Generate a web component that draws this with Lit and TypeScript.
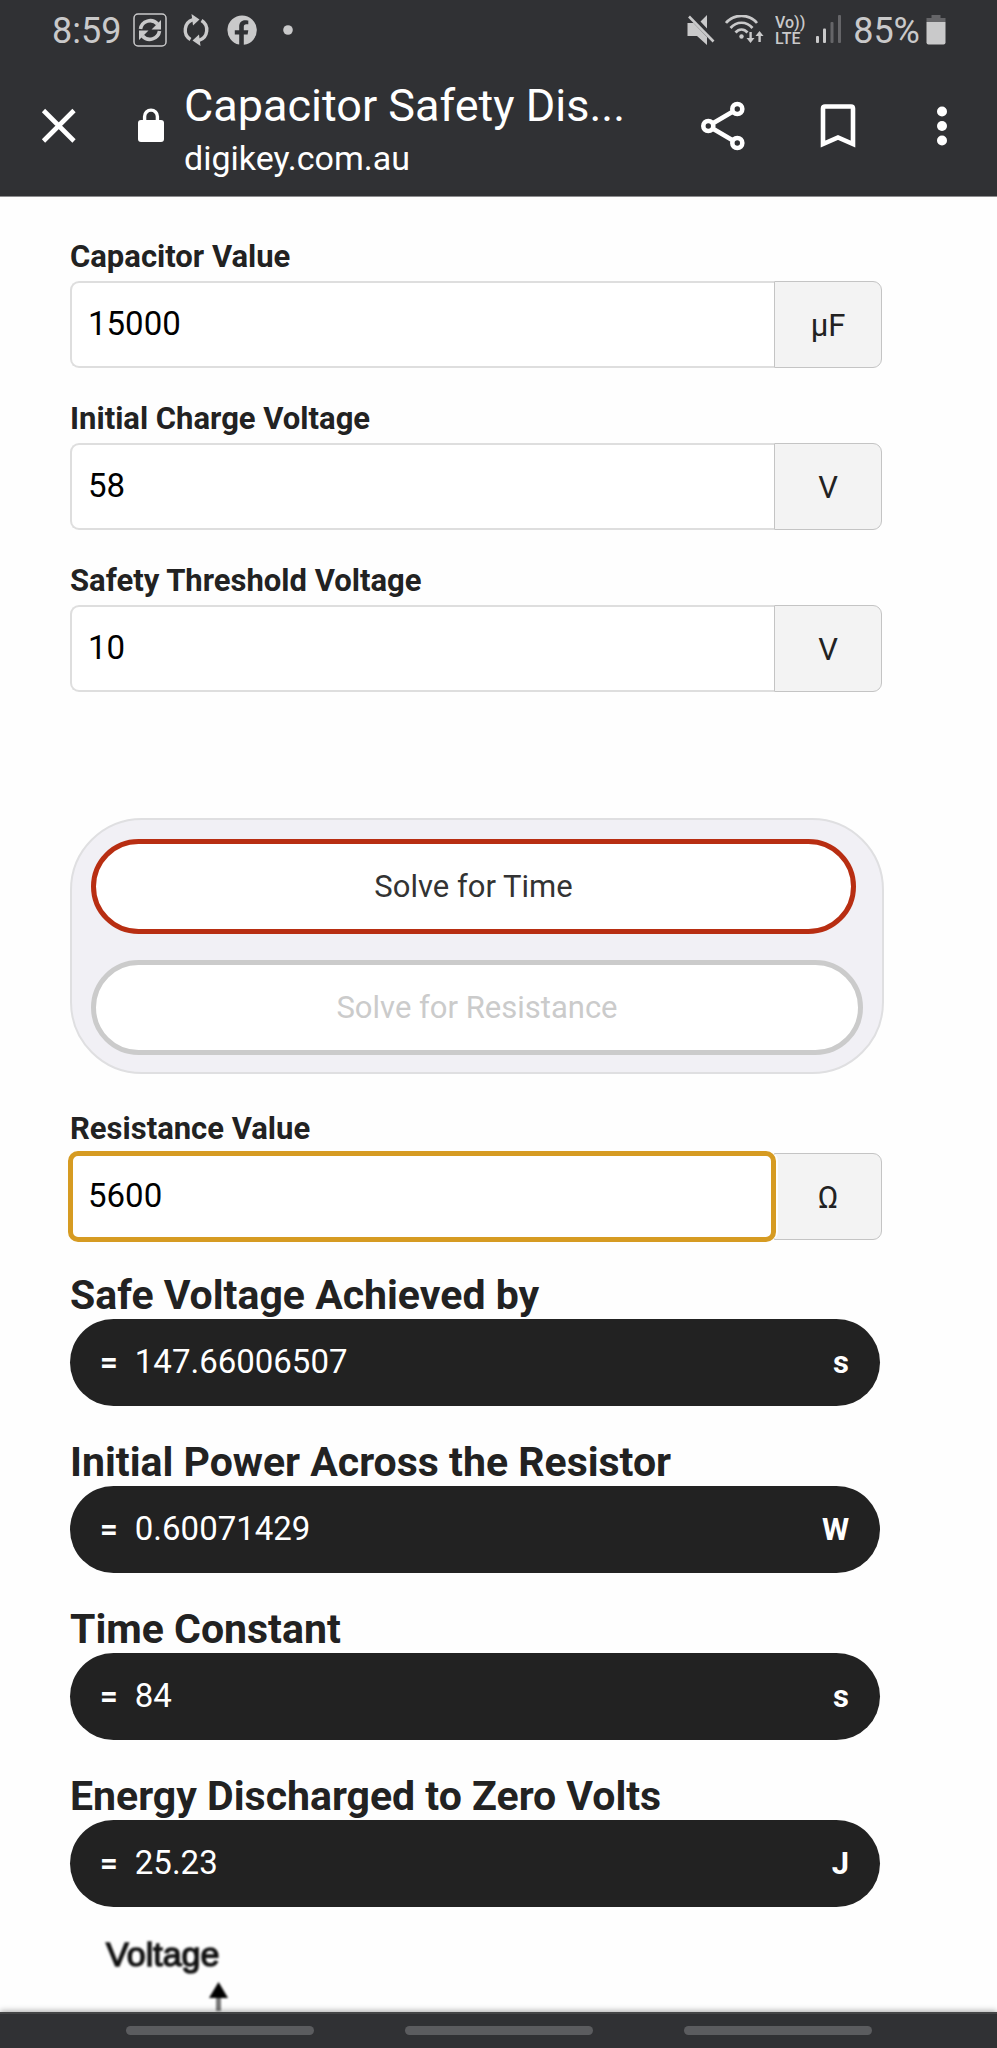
import { LitElement, html, css } from "lit";
import { customElement, state } from "lit/decorators.js";
import { classMap } from "lit/directives/class-map.js";

interface Field {
  id: string;
  label: string;
  value: string;
  unit: string;
  focused?: boolean;
}

interface Result {
  id: string;
  title: string;
  value: string;
  unit: string;
}

const inputs: Field[] = [
  { id: "capacitor", label: "Capacitor Value", value: "15000", unit: "µF" },
  { id: "initial", label: "Initial Charge Voltage", value: "58", unit: "V" },
  { id: "threshold", label: "Safety Threshold Voltage", value: "10", unit: "V" },
];

const resistance: Field = {
  id: "resistance",
  label: "Resistance Value",
  value: "5600",
  unit: "Ω",
  focused: true,
};

const results: Result[] = [
  { id: "safe", title: "Safe Voltage Achieved by", value: "147.66006507", unit: "s" },
  { id: "power", title: "Initial Power Across the Resistor", value: "0.60071429", unit: "W" },
  { id: "tau", title: "Time Constant", value: "84", unit: "s" },
  { id: "energy", title: "Energy Discharged to Zero Volts", value: "25.23", unit: "J" },
];

@customElement("status-bar")
export class StatusBar extends LitElement {
  static styles = css`
    :host {
      display: flex;
      justify-content: space-between;
      align-items: center;
      height: 60px;
      box-sizing: border-box;
      padding: 2px 51px 0 52px;
      color: #c9c9ca;
      font-size: 36px;
      line-height: 40px;
    }
    .group {
      display: flex;
      align-items: center;
    }
    .left {
      gap: 12px;
    }
    .right {
      gap: 10px;
    }
    .charge {
      display: flex;
      align-items: center;
      gap: 6px;
    }
    svg {
      display: block;
      flex: none;
      fill: currentColor;
    }
    .line {
      fill: none;
      stroke: currentColor;
    }
    .dim {
      opacity: 0.35;
    }
    .tiny {
      font: 500 16px Roboto, sans-serif;
    }
  `;

  render() {
    return html`
      <div class="group left">
        <span>8:59</span>
        <svg width="34" height="36" viewBox="0 0 34 36" aria-hidden="true">
          <rect class="line" x="1" y="1" width="32" height="32" rx="4" stroke-width="1.5" />
          <path class="line" stroke-width="3.6" d="M7.5 16 A9.8 9.8 0 0 1 24.5 11 M26.5 18 A9.8 9.8 0 0 1 9.5 23" />
          <path d="M28 7 V16.5 H18.5 Z M6 27 V17.5 H15.5 Z" />
        </svg>
        <svg width="34" height="36" viewBox="0 0 34 36" aria-hidden="true">
          <path class="line" stroke-width="3.4" d="M11.5 26.5 A11 11 0 0 1 14 6.6 M22.5 7.5 A11 11 0 0 1 20 27.4" />
          <path d="M12.5 1 L20.5 6.5 L14 12.5 Z M21.5 33 L13.5 27.5 L20 21.5 Z" />
        </svg>
        <svg width="34" height="36" viewBox="0 0 34 36" aria-hidden="true">
          <path
            d="M17 2.5 A14.7 14.7 0 0 0 14.2 31.6 V21.6 H9.8 V17.2 H14.2 V13.5 C14.2 9.5 16.5 7.2 20.2 7.2 C21.8 7.2 23.3 7.5 23.3 7.5 V11.3 H21.3 C19.3 11.3 18.8 12.4 18.8 13.7 V17.2 H23.3 L22.6 21.6 H18.8 V31.8 A14.7 14.7 0 0 0 17 2.5 Z"
          />
        </svg>
        <svg width="34" height="36" viewBox="0 0 34 36" aria-hidden="true">
          <circle cx="17" cy="17" r="4.8" />
        </svg>
      </div>
      <div class="group right">
        <svg width="28" height="32" viewBox="0 0 28 32" aria-hidden="true">
          <path d="M0.5 8 H6.5 L20 22 V30 L10 21 H0.5 Z M20 0 V13.5 L13.5 6.5 Z" />
          <path class="line" stroke-width="2.6" d="M2 1.5 L26.5 26.5" />
        </svg>
        <svg width="40" height="32" viewBox="0 0 40 32" aria-hidden="true">
          <g class="line" stroke-width="2.7">
            <path d="M1 8 C9 -1.5 24 -1.5 32 8" />
            <path d="M5.5 13 C11.5 6 21.5 6 27.5 13" />
            <path d="M10.5 17.5 C14 13.5 19 13.5 22.5 17.5" />
          </g>
          <circle cx="16.5" cy="21.5" r="2.2" />
          <path d="M24.4 17 h2.4 v6 h2.7 l-4 5 l-4 -5 h2.9 Z M33.4 27 h2.4 v-6 h2.7 l-4 -5 l-4 5 h2.9 Z" />
        </svg>
        <svg width="31" height="38" viewBox="0 0 31 38" aria-label="VoLTE">
          <text class="tiny" x="0" y="16">Vo))</text>
          <text class="tiny" x="0" y="32">LTE</text>
        </svg>
        <svg width="27" height="32" viewBox="0 0 27 32" aria-hidden="true">
          <rect x="0" y="21" width="3" height="7" rx="1" />
          <rect x="7" y="13.5" width="3" height="14.5" rx="1" />
          <rect class="dim" x="14.5" y="7" width="3" height="21" rx="1" />
          <rect class="dim" x="22" y="0" width="3" height="28" rx="1" />
        </svg>
        <div class="charge">
          <span>85%</span>
          <svg width="20" height="32" viewBox="0 0 20 32" aria-hidden="true">
            <path class="dim" d="M5.5 0 h9 v3 h5 v4 h-19 v-4 h5 Z" />
            <path d="M0.5 7 h19 v20.5 q0 2 -2 2 h-15 q-2 0 -2 -2 Z" />
          </svg>
        </div>
      </div>
    `;
  }
}

@customElement("browser-bar")
export class BrowserBar extends LitElement {
  static styles = css`
    :host {
      display: flex;
      align-items: center;
      height: 136px;
      box-sizing: border-box;
      padding: 0 31px 4px 40px;
      color: #fff;
    }
    button {
      display: flex;
      justify-content: center;
      padding: 0;
      border: 0;
      background: none;
      color: inherit;
      flex: none;
    }
    svg {
      display: block;
      flex: none;
      fill: currentColor;
    }
    .line {
      fill: none;
      stroke: currentColor;
    }
    .lock {
      margin: 0 20px 0 60px;
    }
    .page {
      flex: 1;
      min-width: 0;
      padding-top: 8px;
      white-space: nowrap;
    }
    .title {
      font-size: 45px;
      line-height: 56px;
    }
    .domain {
      font-size: 34px;
      line-height: 48px;
    }
    .actions {
      display: flex;
      align-items: center;
      gap: 56px;
    }
    .share {
      margin-right: 11px;
    }
  `;

  render() {
    return html`
      <button type="button" aria-label="Close">
        <svg width="38" height="38" viewBox="0 0 38 38">
          <path class="line" stroke-width="4.6" d="M3.5 3.5 L34 34 M34 3.5 L3.5 34" />
        </svg>
      </button>
      <svg class="lock" width="26" height="36" viewBox="0 0 26 36" aria-hidden="true">
        <path class="line" stroke-width="3.4" d="M6.6 14 V8.5 a6.4 6.4 0 0 1 12.8 0 V14" />
        <rect x="0" y="12" width="26" height="22" rx="3" />
      </svg>
      <div class="page">
        <div class="title">Capacitor Safety Dis...</div>
        <div class="domain">digikey.com.au</div>
      </div>
      <div class="actions">
        <button class="share" type="button" aria-label="Share">
          <svg width="48" height="50" viewBox="0 0 48 50">
            <g class="line" stroke-width="4.6">
              <path d="M14 22.2 L34 10.5 M14 27.8 L34 39.5" />
              <circle cx="9.3" cy="25" r="5" />
              <circle cx="38.3" cy="8" r="5" />
              <circle cx="38.3" cy="42" r="5" />
            </g>
          </svg>
        </button>
        <button type="button" aria-label="Bookmark">
          <svg width="48" height="46" viewBox="0 0 48 46">
            <path class="line" stroke-width="4.6" d="M9 41 V5.5 q0 -2 2 -2 h26 q2 0 2 2 V41 L24 34.5 Z" />
          </svg>
        </button>
        <button type="button" aria-label="More options">
          <svg width="48" height="42" viewBox="0 0 48 42">
            <circle cx="24" cy="6.5" r="5" />
            <circle cx="24" cy="21" r="5" />
            <circle cx="24" cy="35.5" r="5" />
          </svg>
        </button>
      </div>
    `;
  }
}

@customElement("app-root")
export class AppRoot extends LitElement {
  static styles = css`
    :host {
      display: flex;
      flex-direction: column;
      min-height: 100vh;
      background: #fefefe;
      color: #222;
      font-family: Roboto, sans-serif;
    }
    header {
      background: #303134;
      border-bottom: 1px solid #8c8c8e;
    }
    main {
      flex: 1;
      padding: 40px 115px 0 70px;
    }
    .field {
      margin-bottom: 31px;
    }
    .field label {
      display: block;
      margin-bottom: 4px;
      font-size: 31px;
      font-weight: 700;
      line-height: 40px;
    }
    .entry {
      display: flex;
      height: 87px;
    }
    .entry input {
      flex: 1;
      min-width: 0;
      box-sizing: border-box;
      margin: 0;
      padding: 0 16px 2px;
      border: 2px solid #dedede;
      border-right: 0;
      border-radius: 9px 0 0 9px;
      background: #fff;
      color: #000;
      font: 400 33px Roboto, sans-serif;
      outline: none;
    }
    .entry .focused {
      position: relative;
      border-color: transparent;
      border-radius: 8px;
      outline: 5px solid #d69b22;
      outline-offset: -3px;
      box-shadow: 4px 0 0 #fefefe;
    }
    .unit {
      display: flex;
      align-items: center;
      justify-content: center;
      box-sizing: border-box;
      width: 108px;
      padding-top: 2px;
      border: 1px solid #c4c4c4;
      border-radius: 0 9px 9px 0;
      background: #f3f3f3;
      font-size: 31px;
    }
    .modes {
      display: flex;
      flex-direction: column;
      gap: 26px;
      margin: 126px -2px 35px 0;
      padding: 19px 19px 17px;
      border: 2px solid #dfdfe1;
      border-radius: 72px;
      background: #f1f0f5;
    }
    .mode {
      height: 95px;
      padding: 0;
      border: 5px solid #cbcbcb;
      border-radius: 48px;
      background: #fff;
      color: #cbcbcb;
      font: 400 31px Roboto, sans-serif;
    }
    .selected {
      margin-right: 7px;
      border-color: #b82e12;
      color: #333;
    }
    .result {
      margin-bottom: 32px;
    }
    h2 {
      margin: 0;
      font-size: 41px;
      font-weight: 700;
      line-height: 48px;
    }
    .answer {
      display: flex;
      align-items: center;
      height: 87px;
      box-sizing: border-box;
      margin-right: 2px;
      padding: 0 31px 0 30px;
      border-radius: 44px;
      background: #222;
      color: #fff;
      font-size: 31px;
      font-weight: 700;
    }
    .answer output {
      flex: 1;
      margin-left: 17px;
      padding-bottom: 2px;
      font-size: 33px;
      font-weight: 400;
    }
    .chart {
      margin: -8px 0 0;
    }
    .chart svg {
      display: block;
      filter: blur(0.8px);
    }
    .axis-label {
      font: 400 34px "Liberation Sans", sans-serif;
      fill: #111;
      stroke: #111;
      stroke-width: 1.4;
    }
    nav {
      position: relative;
      display: flex;
      justify-content: center;
      align-items: center;
      gap: 91px;
      height: 36px;
      box-sizing: border-box;
      padding-bottom: 2px;
      border-top: 2px solid #444546;
      background: #303134;
      box-shadow: 0 -1px 6px rgba(0, 0, 0, 0.35);
    }
    nav button {
      width: 188px;
      height: 9px;
      padding: 0;
      border: 0;
      border-radius: 5px;
      background: #5b5c5f;
    }
  `;

  @state() private mode: "time" | "resistance" = "time";

  private field(f: Field) {
    return html`
      <div class="field">
        <label for=${f.id}>${f.label}</label>
        <div class="entry">
          <input
            id=${f.id}
            class=${classMap({ focused: !!f.focused })}
            type="text"
            inputmode="decimal"
            .value=${f.value}
          />
          <span class="unit">${f.unit}</span>
        </div>
      </div>
    `;
  }

  private modeButton(mode: "time" | "resistance", label: string) {
    const on = this.mode === mode;
    return html`
      <button
        type="button"
        class=${classMap({ mode: true, selected: on })}
        aria-pressed=${on}
        @click=${() => (this.mode = mode)}
      >
        ${label}
      </button>
    `;
  }

  private result(r: Result) {
    return html`
      <section class="result">
        <h2 id=${r.id}>${r.title}</h2>
        <div class="answer">
          <span>=</span>
          <output aria-labelledby=${r.id}>${r.value}</output>
          <span>${r.unit}</span>
        </div>
      </section>
    `;
  }

  render() {
    return html`
      <header>
        <status-bar></status-bar>
        <browser-bar></browser-bar>
      </header>
      <main>
        ${inputs.map((f) => this.field(f))}
        <div class="modes">
          ${this.modeButton("time", "Solve for Time")}
          ${this.modeButton("resistance", "Solve for Resistance")}
        </div>
        ${this.field(resistance)} ${results.map((r) => this.result(r))}
        <figure class="chart">
          <svg width="180" height="80" viewBox="0 0 180 80">
            <text class="axis-label" x="36" y="35">Voltage</text>
            <path fill="#777" d="M146 64 h5 v16 h-5 Z" />
            <path d="M148.5 51 L158 67 H139 Z" />
          </svg>
        </figure>
      </main>
      <nav>
        <button type="button" aria-label="Recent apps"></button>
        <button type="button" aria-label="Home"></button>
        <button type="button" aria-label="Back"></button>
      </nav>
    `;
  }
}
